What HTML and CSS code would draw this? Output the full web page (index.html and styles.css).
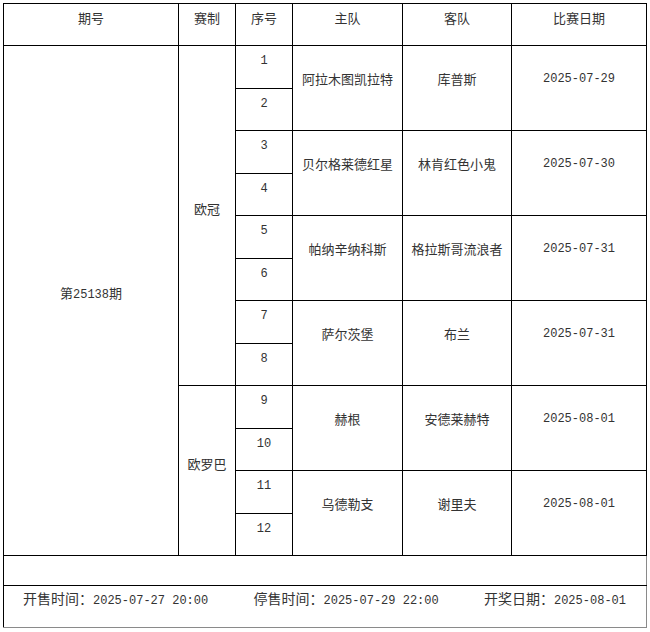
FILE: index.html
```html
<!DOCTYPE html>
<html lang="zh-CN">
<head>
<meta charset="utf-8">
<title>第25138期</title>
<link rel="stylesheet" href="styles.css">
</head>
<body>
<div class="page">
<table class="sched">
  <colgroup>
    <col class="c-issue"><col class="c-type"><col class="c-no"><col class="c-home"><col class="c-away"><col class="c-date">
  </colgroup>
  <thead>
    <tr class="head">
      <th>期号</th><th>赛制</th><th>序号</th><th>主队</th><th>客队</th><th class="gl">比赛日期</th>
    </tr>
  </thead>
  <tbody>
    <tr class="r">
      <td rowspan="12">第<span class="num">25138</span>期</td>
      <td rowspan="8">欧冠</td>
      <td class="num seq">1</td>
      <td rowspan="2" class="m">阿拉木图凯拉特</td>
      <td rowspan="2" class="m">库普斯</td>
      <td rowspan="2" class="m gl num">2025-07-29</td>
    </tr>
    <tr class="r"><td class="num seq">2</td></tr>
    <tr class="r">
      <td class="num seq">3</td>
      <td rowspan="2" class="m">贝尔格莱德红星</td>
      <td rowspan="2" class="m">林肯红色小鬼</td>
      <td rowspan="2" class="m gl num">2025-07-30</td>
    </tr>
    <tr class="r"><td class="num seq">4</td></tr>
    <tr class="r">
      <td class="num seq">5</td>
      <td rowspan="2" class="m">帕纳辛纳科斯</td>
      <td rowspan="2" class="m">格拉斯哥流浪者</td>
      <td rowspan="2" class="m gl num">2025-07-31</td>
    </tr>
    <tr class="r"><td class="num seq">6</td></tr>
    <tr class="r">
      <td class="num seq">7</td>
      <td rowspan="2" class="m">萨尔茨堡</td>
      <td rowspan="2" class="m">布兰</td>
      <td rowspan="2" class="m gl num">2025-07-31</td>
    </tr>
    <tr class="r"><td class="num seq">8</td></tr>
    <tr class="r">
      <td rowspan="4">欧罗巴</td>
      <td class="num seq">9</td>
      <td rowspan="2" class="m">赫根</td>
      <td rowspan="2" class="m">安德莱赫特</td>
      <td rowspan="2" class="m gl num">2025-08-01</td>
    </tr>
    <tr class="r"><td class="num seq">10</td></tr>
    <tr class="r">
      <td class="num seq">11</td>
      <td rowspan="2" class="m">乌德勒支</td>
      <td rowspan="2" class="m">谢里夫</td>
      <td rowspan="2" class="m gl num">2025-08-01</td>
    </tr>
    <tr class="r"><td class="num seq">12</td></tr>
  </tbody>
  <tfoot>
    <tr class="blank"><td colspan="6" class="gr"></td></tr>
    <tr class="foot">
      <td colspan="6" class="gr gb">
        <div class="info">
          <span>开售时间：<span class="num">2025-07-27 20:00</span></span>
          <span>停售时间：<span class="num">2025-07-29 22:00</span></span>
          <span>开奖日期：<span class="num">2025-08-01</span></span>
        </div>
      </td>
    </tr>
  </tfoot>
</table>
</div>
</body>
</html>
```
FILE: styles.css
```css
html, body {
  margin: 0;
  padding: 0;
  background: #fff;
}
.page {
  padding: 3px 0 0 3px;
}
.sched {
  border-collapse: collapse;
  table-layout: fixed;
  width: 643px;
  font-family: "Noto Sans CJK SC", "Liberation Sans", sans-serif;
  font-size: 13px;
  color: #333;
}
.c-issue { width: 175px; }
.c-type { width: 57px; }
.c-no { width: 57px; }
.c-home { width: 110px; }
.c-away { width: 109px; }
.c-date { width: 135px; }
.sched th,
.sched td {
  border: 1px solid #000;
  padding: 0 0 14px 0;
  text-align: center;
  vertical-align: middle;
  font-weight: normal;
  line-height: 18px;
  white-space: nowrap;
}
.sched td.seq { padding-bottom: 11px; }
.sched td.m { padding-bottom: 18px; }
.head { height: 42px; }
.r { height: 42.5px; }
.blank { height: 30px; }
.foot { height: 42px; }
.sched .gl { border-left-color: #8a8a8a; }
.sched .gr { border-right-color: #8a8a8a; }
.sched .gb { border-bottom-color: #8a8a8a; }
.num {
  font-family: "Liberation Mono", monospace;
  font-size: 12px;
}
.info {
  display: flex;
  justify-content: space-between;
  padding: 0 20px 0 19px;
  font-size: 14px;
}
.info .num { font-size: 12px; }
```
